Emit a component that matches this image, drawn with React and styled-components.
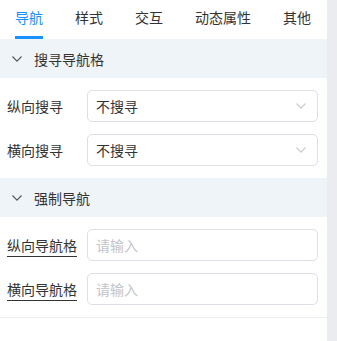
import React from 'react'
import styled, { createGlobalStyle } from 'styled-components'

const Global = createGlobalStyle`
  body {
    margin: 0;
    background: #ebecf0;
    font-family: "Noto Sans CJK SC", "Noto Sans", sans-serif;
  }
`

const Page = styled.div`
  display: flex;
  height: 341px;
  overflow: hidden;
`

const Panel = styled.div`
  width: 327px;
  background: #fff;
  color: #333;
  font-size: 14px;
`

const Tabs = styled.div`
  display: flex;
  height: 39px;
  padding-left: 15px;
  gap: 32px;
`

const Tab = styled.div`
  box-sizing: border-box;
  height: 39px;
  line-height: 35px;
  color: ${p => (p.active ? '#1890ff' : '#333')};
  border-bottom: 3px solid ${p => (p.active ? '#1890ff' : 'transparent')};
`

const Header = styled.div`
  display: flex;
  align-items: center;
  height: 39px;
  background: #eff4f9;
  padding-left: 12px;
  gap: 12px;
`

const Body = styled.div`
  display: flex;
  flex-direction: column;
  gap: 12px;
  padding: 12px 9px 12px 7px;
`

const Row = styled.div`
  display: flex;
  align-items: center;
`

const Label = styled.div`
  width: 80px;
  flex: none;
  ${p => p.underline && `
    span {
      border-bottom: 1px solid #333;
      padding-bottom: 1px;
    }
  `}
`

const Field = styled.div`
  flex: 1;
  box-sizing: border-box;
  height: 32px;
  border: 1px solid #dcdfe6;
  border-radius: 5px;
  display: flex;
  align-items: center;
  justify-content: space-between;
  padding: 0 11px 0 8px;
  color: ${p => (p.placeholder ? '#c0c4cc' : '#333')};
`

const Divider = styled.div`
  border-top: 1px solid #ebeef5;
`

const Chevron = ({ color = '#555' }) => (
  <svg width="10" height="6" viewBox="0 0 10 6">
    <path d="M0.5 0.5 L5 5.2 L9.5 0.5" fill="none" stroke={color} strokeWidth="1.1" />
  </svg>
)

const tabs = ['导航', '样式', '交互', '动态属性', '其他']

export default function App() {
  return (
    <Page>
      <Global />
      <Panel>
        <Tabs>
          {tabs.map((t, i) => (
            <Tab key={t} active={i === 0}>{t}</Tab>
          ))}
        </Tabs>
        <Header>
          <Chevron />
          <span>搜寻导航格</span>
        </Header>
        <Body>
          <Row>
            <Label>纵向搜寻</Label>
            <Field>不搜寻<Chevron color="#c8cbd1" /></Field>
          </Row>
          <Row>
            <Label>横向搜寻</Label>
            <Field>不搜寻<Chevron color="#c8cbd1" /></Field>
          </Row>
        </Body>
        <Header>
          <Chevron />
          <span>强制导航</span>
        </Header>
        <Body>
          <Row>
            <Label underline><span>纵向导航格</span></Label>
            <Field placeholder>请输入</Field>
          </Row>
          <Row>
            <Label underline><span>横向导航格</span></Label>
            <Field placeholder>请输入</Field>
          </Row>
        </Body>
        <Divider />
      </Panel>
    </Page>
  )
}
